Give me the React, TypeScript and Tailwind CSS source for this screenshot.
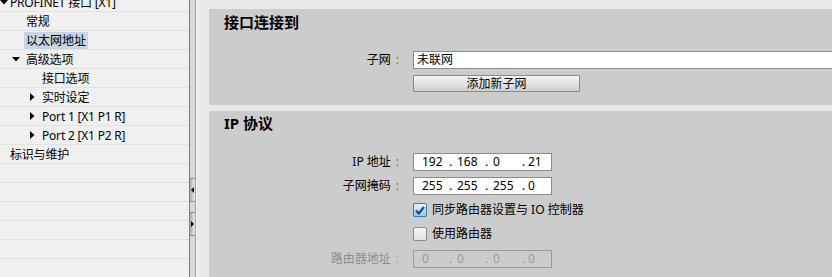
import React from 'react';

const FONT = { fontFamily: '"Noto Sans", "Noto Sans CJK SC", sans-serif' };

type TreeItem = {
  label: string;
  pad: number; // px to the start of the row content
  arrow?: 'down' | 'right';
  selected?: boolean;
};

const treeItems: TreeItem[] = [
  { label: 'PROFINET 接口 [X1]', pad: 0, arrow: 'down' },
  { label: '常规', pad: 26 },
  { label: '以太网地址', pad: 24, selected: true },
  { label: '高级选项', pad: 12, arrow: 'down' },
  { label: '接口选项', pad: 42 },
  { label: '实时设定', pad: 30, arrow: 'right' },
  { label: 'Port 1 [X1 P1 R]', pad: 30, arrow: 'right' },
  { label: 'Port 2 [X1 P2 R]', pad: 30, arrow: 'right' },
  { label: '标识与维护', pad: 10 },
  { label: '', pad: 0 },
  { label: '', pad: 0 },
  { label: '', pad: 0 },
  { label: '', pad: 0 },
  { label: '', pad: 0 },
  { label: '', pad: 0 },
];

const Arrow = ({ dir }: { dir: 'down' | 'right' }) =>
  dir === 'down' ? (
    <svg width="8" height="5" viewBox="0 0 8 5">
      <path d="M0 0 H8 L4 4.5 Z" fill="#000" />
    </svg>
  ) : (
    <svg width="5" height="8" viewBox="0 0 5 8">
      <path d="M0 0 V8 L4.5 4 Z" fill="#000" />
    </svg>
  );

const TreeRow = ({ item }: { item: TreeItem }) => (
  <div
    className="h-[19px] border-b border-[#e2e2e2] flex items-center text-[12px] text-black whitespace-nowrap"
    style={{ paddingLeft: item.pad }}
  >
    {item.arrow && (
      <span className={item.arrow === 'down' ? (item.pad === 0 ? 'w-[10px] flex' : 'w-[14px] flex') : 'w-[12px] flex'}>
        <Arrow dir={item.arrow} />
      </span>
    )}
    {item.selected ? (
      <span className="bg-[#c9d5e1] px-[2px] h-[17px] leading-[17px]">{item.label}</span>
    ) : (
      <span className="leading-[17px] tracking-[-0.2px]">{item.label}</span>
    )}
  </div>
);

const SplitButton = ({ dir }: { dir: 'left' | 'right' }) => (
  <div className="h-[24px] border-y border-[#8e8e8e] bg-gradient-to-r from-[#a9a9a9] via-[#cfcfcf] to-[#e6e6e6] flex items-center justify-start pl-[1px]">
    <svg width="3" height="6" viewBox="0 0 3 6">
      {dir === 'left' ? <path d="M3 0 V6 L0 3 Z" fill="#000" /> : <path d="M0 0 V6 L3 3 Z" fill="#000" />}
    </svg>
  </div>
);

const Label = ({ text, muted }: { text: React.ReactNode; muted?: boolean }) => (
  <div
    className={`w-[192px] shrink-0 flex justify-end items-center pr-[2px] text-[12px] ${
      muted ? 'text-[#8c8c8c]' : 'text-black'
    }`}
  >
    <span>{text}</span>
    <span className={`ml-[5px] ${muted ? 'text-[#a8a8a8]' : 'text-[#8a6d45]'}`}>:</span>
  </div>
);

const IpField = ({ parts, muted }: { parts: string[]; muted?: boolean }) => (
  <div
    className={`ml-[12px] w-[139px] shrink-0 h-[18px] border flex items-center pl-[8px] text-[12px] leading-none ${
      muted ? 'border-[#9c9c9c] bg-transparent text-[#9a9a9a]' : 'border-[#8c8c8c] bg-white text-black'
    }`}
  >
    <span className="w-[27px]">{parts[0]}</span>
    <span className="w-[8px]">.</span>
    <span className="w-[28px]">{parts[1]}</span>
    <span className="w-[8px]">.</span>
    <span className="w-[29px]">{parts[2]}</span>
    <span className="w-[6px]">.</span>
    <span>{parts[3]}</span>
  </div>
);

const Checkbox = ({ checked }: { checked?: boolean }) =>
  checked ? (
    <span className="w-[14px] h-[14px] rounded-[2px] border border-[#3f78a8] bg-gradient-to-b from-[#e6f4fd] to-[#8fc8ee] flex items-center justify-center">
      <svg width="10" height="9" viewBox="0 0 10 9">
        <path d="M1 4.5 L3.8 7.5 L9 1" fill="none" stroke="#1f4a86" strokeWidth="2.2" />
      </svg>
    </span>
  ) : (
    <span className="w-[14px] h-[14px] rounded-[2px] border border-[#8e8e8e] bg-gradient-to-b from-[#f4f4f4] to-[#e2e2e2]" />
  );

export default function App() {
  return (
    <div className="w-[832px] h-[277px] overflow-hidden flex bg-[#e9e9e9]" style={FONT}>
      {/* tree */}
      <div className="w-[189px] shrink-0 h-full bg-[#f0f0f0] overflow-hidden">
        <div className="mt-[-7px]">
          {treeItems.map((item, i) => (
            <TreeRow key={i} item={item} />
          ))}
        </div>
      </div>

      {/* splitter */}
      <div className="w-[8px] shrink-0 h-full flex">
        <div className="w-[1px] bg-[#7c7c7c]" />
        <div className="w-[5px] bg-[#d9d9d9] flex flex-col">
          <div className="h-[178px]" />
          <SplitButton dir="left" />
          <div className="h-[10px]" />
          <SplitButton dir="right" />
        </div>
        <div className="w-[1px] bg-[#a3a3a3]" />
        <div className="w-[1px] bg-[#f3f3f3]" />
      </div>

      {/* editor */}
      <div className="flex-1 h-full pl-[12px] pt-[9px] flex flex-col gap-[6px] min-w-0 overflow-hidden">
        <div className="h-[96px] shrink-0 bg-[#cccccc] pt-[3px] overflow-hidden">
          <div className="ml-[15px] text-[15px] font-bold leading-[20px] text-black">接口连接到</div>
          <div className="mt-[19px] flex h-[18px]">
            <Label text="子网" />
            <div className="ml-[12px] w-[480px] shrink-0 h-[18px] border border-[#8c8c8c] bg-white pl-[3px] text-[12px] leading-[16px] text-black">
              未联网
            </div>
          </div>
          <div className="mt-[6px] ml-[204px] w-[167px] h-[17px] border border-[#8a8a8a] rounded-[1px] bg-gradient-to-b from-[#f4f4f4] via-[#e4e4e4] to-[#cfcfcf] text-center text-[12px] leading-[15px] text-black">
            添加新子网
          </div>
        </div>

        <div className="flex-1 bg-[#cccccc] pt-[2px]">
          <div className="ml-[15px] text-[15px] font-bold leading-[20px] text-black">IP 协议</div>
          <div className="mt-[20px] flex h-[18px]">
            <Label text="IP 地址" />
            <IpField parts={['192', '168', '0', '21']} />
          </div>
          <div className="mt-[6px] flex h-[18px]">
            <Label text="子网掩码" />
            <IpField parts={['255', '255', '255', '0']} />
          </div>
          <div className="mt-[6px] ml-[204px] flex items-center gap-[5px] h-[18px] text-[12px] text-black">
            <Checkbox checked />
            <span>同步路由器设置与 IO 控制器</span>
          </div>
          <div className="mt-[6px] ml-[204px] flex items-center gap-[5px] h-[18px] text-[12px] text-black">
            <Checkbox />
            <span>使用路由器</span>
          </div>
          <div className="mt-[7px] flex h-[18px]">
            <Label text="路由器地址" muted />
            <IpField parts={['0', '0', '0', '0']} muted />
          </div>
        </div>
      </div>
    </div>
  );
}
